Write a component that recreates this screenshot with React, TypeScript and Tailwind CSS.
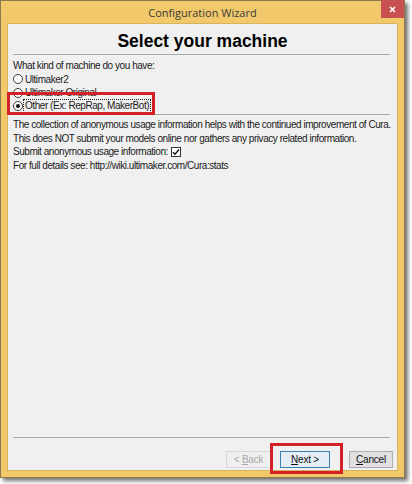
function Radio({ checked, label, focused }: { checked?: boolean; label: string; focused?: boolean }) {
  return (
    <div className="flex items-center h-[13.5px] whitespace-nowrap">
      <span className="w-[10px] h-[10px] shrink-0 rounded-full border border-[#3c3c3c] bg-white flex items-center justify-center">
        {checked && <span className="w-[4px] h-[4px] rounded-full bg-[#111]" />}
      </span>
      <span className={focused ? 'ml-[1px] px-[1px] leading-[12px] outline outline-1 outline-dotted outline-[#222]' : 'ml-[2px]'}>
        {label}
      </span>
    </div>
  );
}

function Btn({ children, disabled, active }: { children: React.ReactNode; disabled?: boolean; active?: boolean }) {
  let cls = 'h-[17px] flex items-center justify-center whitespace-pre text-[10px] tracking-[-0.2px] border ';
  if (disabled) cls += 'border-[#d6d6d6] bg-[#efefef] text-[#a6a6a6]';
  else if (active) cls += 'border-[#3c7fb1] bg-[#e5eef7] text-[#111]';
  else cls += 'border-[#adadad] bg-[#e1e1e1] text-[#111]';
  return <div className={cls + ' w-full'}>{children}</div>;
}

export default function App() {
  return (
    <div className="w-[412px] h-[484px] bg-white font-['Liberation_Sans',Arial,sans-serif] text-[#1b1b1b]">
      <div className="w-[405px] h-[478px] bg-[#f1c96b] border border-[#8c7a4e] shadow-[3px_3px_4px_rgba(0,0,0,0.55)] flex flex-col">
        {/* title bar */}
        <div className="relative h-[22px] flex items-center justify-center">
          <span className="font-['Open_Sans',sans-serif] text-[11px] text-[#3a3a3a] leading-none mt-[1px]">Configuration Wizard</span>
          <div className="absolute right-0 top-[-1px] w-[23px] h-[18px] bg-[#c75050] flex items-center justify-center">
            <svg width="7" height="7" viewBox="0 0 7 7">
              <path d="M1 1L6 6M6 1L1 6" stroke="#fff" strokeWidth="1.6" />
            </svg>
          </div>
        </div>

        {/* client area */}
        <div className="flex-1 mx-[6px] mb-[6px] bg-[#f0f0f0] border border-[#d9b45e] flex flex-col">
          <div className="pt-[7px] text-center text-[17.5px] leading-[20px] font-bold text-black">Select your machine</div>
          <div className="mt-[3px] ml-[5px] mr-[7px] h-px bg-[#a9a9a9]" />

          <div className="pl-[5px] text-[10px] tracking-[-0.45px]">
            <div className="mt-[4px] leading-[13.5px]">What kind of machine do you have:</div>
            <Radio label="Ultimaker2" />
            <Radio label="Ultimaker Original" />
            <div className="relative">
              <Radio checked focused label="Other (Ex: RepRap, MakerBot)" />
              <div className="absolute left-[-6px] top-[-7.5px] bottom-[-2px] w-[148px] border-[3px] border-[#d42027]" />
            </div>
          </div>

          <div className="mt-[1px] ml-[5px] mr-[7px] h-px bg-[#a9a9a9]" />

          <div className="pl-[5px] mt-[3px] text-[10px] leading-[13.5px] tracking-[-0.45px] whitespace-nowrap">
            <div>The collection of anonymous usage information helps with the continued improvement of Cura.</div>
            <div>This does NOT submit your models online nor gathers any privacy related information.</div>
            <div className="flex items-center">
              <span>Submit anonymous usage information:</span>
              <span className="ml-[3px] w-[10px] h-[10px] border border-[#333] bg-white flex items-center justify-center">
                <svg width="8" height="8" viewBox="0 0 8 8">
                  <path d="M1 4.2L3 6.2L7 1.5" stroke="#111" strokeWidth="1.4" fill="none" />
                </svg>
              </span>
            </div>
            <div>For full details see: http://wiki.ultimaker.com/Cura:stats</div>
          </div>

          <div className="flex-1" />

          <div className="ml-[5px] mr-[7px] h-px bg-[#a9a9a9]" />
          <div className="mt-[13px] mb-[2px] pr-[4px] flex justify-end">
            <div className="w-[45px]">
              <Btn disabled>{'< '}<span className="underline">B</span>ack</Btn>
            </div>
            <div className="relative w-[50px] ml-[9px]">
              <Btn active><span className="underline">N</span>{'ext >'}</Btn>
              <div className="absolute left-[-10px] right-[-13px] top-[-8px] bottom-[-6px] border-[3px] border-[#d42027]" />
            </div>
            <div className="w-[44px] ml-[19px]">
              <Btn><span className="underline">C</span>ancel</Btn>
            </div>
          </div>
        </div>
      </div>
    </div>
  );
}
